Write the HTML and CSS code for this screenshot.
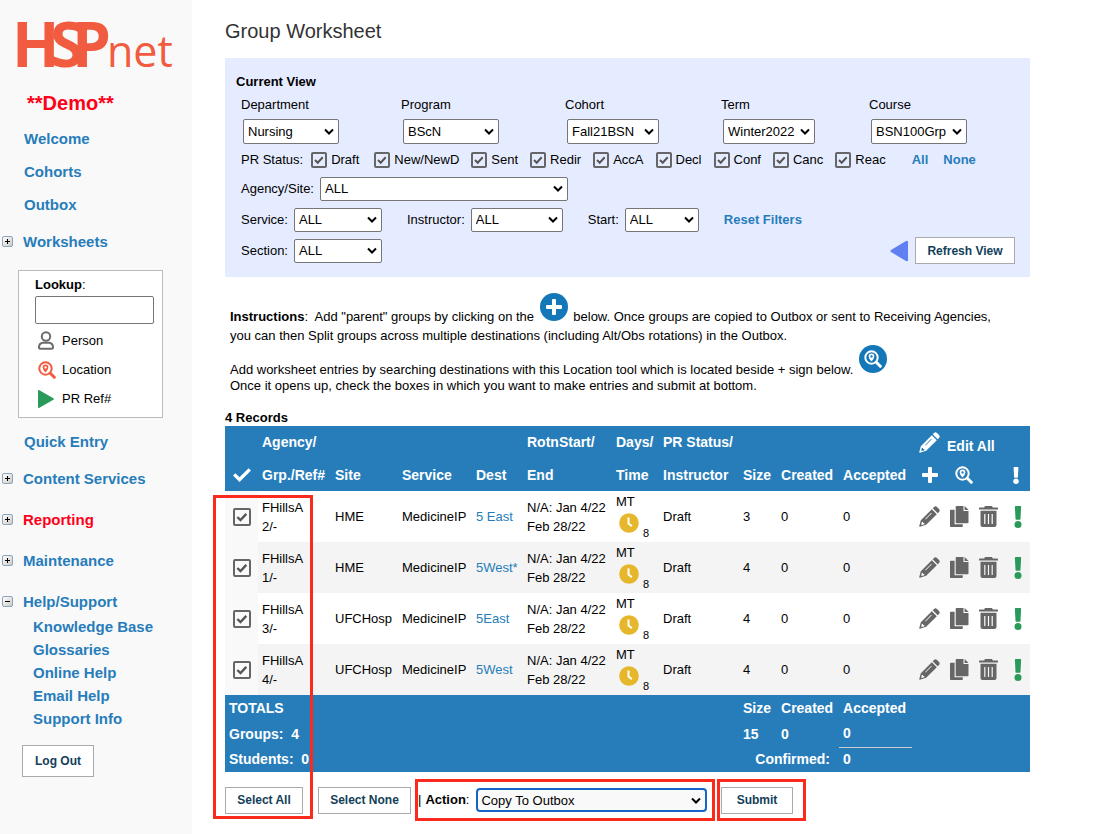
FILE: index.html
```html
<!DOCTYPE html>
<html lang="en">
<head>
    <meta charset="UTF-8">
    <meta name="viewport" content="width=device-width, initial-scale=1.0">
    <title>HSPnet - Group Worksheet</title>
    <link rel="stylesheet" href="styles.css">
</head>
<body>
    <!-- icon sprite -->
    <svg class="sprite" aria-hidden="true">
        <symbol id="pencil" viewBox="0 0 21 21">
            <path d="M15 1q1.500-1.400 3 0l2 2q1.400 1.500 0 3l-1.300 1.300-5-5z"/>
            <path fill-rule="evenodd" d="M12.800 3.200l5 5L7.200 18.800.7 20.800l-.5-.5L1.800 14.200zM2.900 15.800l-.7 2.500.6.600 2.600-.7-.1-1.100-1.200-.1-.1-1.100zM12.300 6.800L6.100 13l.5.5 6.200-6.200z"/>
        </symbol>
        <symbol id="copy" viewBox="0 0 19 21">
            <path d="M6.500 0h7v5H18.500v11.500q0 .7-.8.700H6.500q-.8 0-.8-.7V.7q0-.7.8-.7z"/>
            <path d="M14.600 0l4 4h-4z"/>
            <path d="M.8 3.800h3.800v14.400h8.200v2q0 .8-.8.800H.8q-.8 0-.8-.8V4.600q0-.8.8-.8z"/>
        </symbol>
        <symbol id="trash" viewBox="0 0 19 21">
            <path d="M6 0h7l.8 1.400h4.500q.7 0 .7.700v1.300H0V2.100q0-.7.7-.7h4.500z"/>
            <path fill-rule="evenodd" d="M1.500 4.800h16V19q0 2-2 2h-12q-2 0-2-2zM5.200 8v10h1.200V8zm3.700 0v10h1.200V8zm3.700 0v10h1.200V8z"/>
        </symbol>
        <symbol id="alert" viewBox="0 0 8 22">
            <path d="M1.700 0h4.600q.9 0 .8.900l-.6 12.100q0 .8-.8.800H2.300q-.8 0-.8-.8L.9.900Q.8 0 1.700 0z"/>
            <circle cx="4" cy="18.500" r="3.500"/>
        </symbol>
        <symbol id="clock" viewBox="0 0 20 20">
            <circle cx="10" cy="10" r="9.800"/>
            <path class="line" d="M9.500 4.500v6l3.400 2.600"/>
        </symbol>
        <symbol id="plus" viewBox="0 0 16 16">
            <path d="M7 0h2q1 0 1 1v5h5q1 0 1 1v2q0 1-1 1h-5v5q0 1-1 1H7q-1 0-1-1v-5H1q-1 0-1-1V7q0-1 1-1h5V1q0-1 1-1z"/>
        </symbol>
        <symbol id="search" viewBox="0 0 18 18">
            <circle class="ring" cx="7.500" cy="7.500" r="6.200"/>
            <path class="handle" d="M12.300 12.300l4 4"/>
            <path fill-rule="evenodd" d="M7.500 3.500q2.900.2 2.900 2.800 0 2.200-2.900 5.200-2.900-3-2.900-5.200 0-2.600 2.900-2.800zm0 1.700a1.200 1.200 0 100 2.400 1.200 1.200 0 100-2.400z"/>
        </symbol>
        <symbol id="check" viewBox="0 0 18 14">
            <path d="M0 7.600l2.300-2.300L6.500 9.300 15.600.2 18 2.500 6.500 14z"/>
        </symbol>
    </svg>

    <div class="page">
        <nav class="sidebar">
            <svg class="logo" viewBox="0 0 156 50" role="img" aria-label="HSPnet">
                <text class="logo-hsp" x="-6 32 54" y="47">HSP</text>
                <path d="M54 6h14" stroke="#f15b40" stroke-width="7" stroke-linecap="round"/>
                <text class="logo-net" x="89" y="47">net</text>
            </svg>
            <p class="demo">**Demo**</p>
            <ul class="menu">
                <li><a href="#">Welcome</a></li>
                <li><a href="#">Cohorts</a></li>
                <li><a href="#">Outbox</a></li>
                <li class="group"><button type="button" class="toggle" aria-label="Expand Worksheets"></button><a href="#">Worksheets</a></li>
            </ul>
            <form class="lookup">
                <label for="lookup"><b>Lookup</b>:</label>
                <input type="text" id="lookup">
                <a href="#">
                    <svg class="person" viewBox="0 0 16 19"><circle cx="8" cy="5.500" r="4.200"/><path d="M4.500 11.800h7q3.500.7 3.500 4.500 0 1.500-1.500 1.500h-11q-1.500 0-1.500-1.500 0-3.800 3.500-4.500z"/></svg>
                    Person
                </a>
                <a href="#"><svg class="location"><use href="#search"/></svg>Location</a>
                <a href="#"><svg class="play" viewBox="0 0 16 18"><path d="M0 1q0-1.500 1.400-.8l14 8q1 .8 0 1.600l-14 8Q0 18.500 0 17z"/></svg>PR Ref#</a>
            </form>
            <ul class="menu menu-lower">
                <li><a href="#">Quick Entry</a></li>
                <li class="group"><button type="button" class="toggle" aria-label="Expand Content Services"></button><a href="#">Content Services</a></li>
                <li class="group"><button type="button" class="toggle" aria-label="Expand Reporting"></button><a href="#" class="red">Reporting</a></li>
                <li class="group"><button type="button" class="toggle" aria-label="Expand Maintenance"></button><a href="#">Maintenance</a></li>
                <li class="group"><button type="button" class="toggle open" aria-label="Collapse Help/Support"></button><a href="#">Help/Support</a></li>
            </ul>
            <ul class="submenu">
                <li><a href="#">Knowledge Base</a></li>
                <li><a href="#">Glossaries</a></li>
                <li><a href="#">Online Help</a></li>
                <li><a href="#">Email Help</a></li>
                <li><a href="#">Support Info</a></li>
            </ul>
            <button type="button" class="btn btn-logout">Log Out</button>
        </nav>

        <main class="main">
            <h1>Group Worksheet</h1>

            <form class="filters">
                <h2>Current View</h2>
                <div class="fields">
                    <div class="field"><label for="department">Department</label><select id="department" class="w-96"><option>Nursing</option></select></div>
                    <div class="field"><label for="program">Program</label><select id="program" class="w-96"><option>BScN</option></select></div>
                    <div class="field"><label for="cohort">Cohort</label><select id="cohort" class="w-92"><option>Fall21BSN</option></select></div>
                    <div class="field"><label for="term">Term</label><select id="term" class="w-92"><option>Winter2022</option></select></div>
                    <div class="field"><label for="course">Course</label><select id="course" class="w-96"><option>BSN100Grp</option></select></div>
                </div>
                <div class="row status">
                    <span>PR Status:</span>
                    <label class="first"><input type="checkbox" checked>Draft</label>
                    <label><input type="checkbox" checked>New/NewD</label>
                    <label><input type="checkbox" checked>Sent</label>
                    <label><input type="checkbox" checked>Redir</label>
                    <label><input type="checkbox" checked>AccA</label>
                    <label><input type="checkbox" checked>Decl</label>
                    <label><input type="checkbox" checked>Conf</label>
                    <label><input type="checkbox" checked>Canc</label>
                    <label><input type="checkbox" checked>Reac</label>
                    <a href="#" class="all">All</a>
                    <a href="#">None</a>
                </div>
                <div class="row">
                    <label for="agency">Agency/Site:</label>
                    <select id="agency" class="w-248"><option>ALL</option></select>
                </div>
                <div class="row">
                    <label for="service">Service:</label>
                    <select id="service" class="w-88"><option>ALL</option></select>
                    <label for="instructor" class="next">Instructor:</label>
                    <select id="instructor" class="w-92"><option>ALL</option></select>
                    <label for="start" class="next">Start:</label>
                    <select id="start" class="w-74"><option>ALL</option></select>
                    <a href="#" class="next">Reset Filters</a>
                </div>
                <div class="row">
                    <label for="section">Section:</label>
                    <select id="section" class="w-88"><option>ALL</option></select>
                    <span class="refresh">
                        <svg class="arrow" viewBox="0 0 19 22"><path d="M18 2v18q0 2-2 1L1 12q-1-1 0-2L16 1q2-1 2 1z"/></svg>
                        <button type="button" class="btn btn-refresh">Refresh View</button>
                    </span>
                </div>
            </form>

            <section class="instructions">
                <p><b>Instructions</b>:&nbsp; Add "parent" groups by clicking on the <span class="round"><svg class="i-plus"><use href="#plus"/></svg></span> below. Once groups are copied to Outbox or sent to Receiving Agencies,<br>you can then Split groups across multiple destinations (including Alt/Obs rotations) in the Outbox.</p>
                <p class="second">Add worksheet entries by searching destinations with this Location tool which is located beside + sign below. <span class="round"><svg class="i-search"><use href="#search"/></svg></span><br>Once it opens up, check the boxes in which you want to make entries and submit at bottom.</p>
            </section>

            <h3>4 Records</h3>
            <div class="worksheet">
                <table>
                    <colgroup>
                        <col class="c-check"><col class="c-group"><col class="c-site"><col class="c-service"><col class="c-dest"><col class="c-rotn">
                        <col class="c-days"><col class="c-status"><col class="c-size"><col class="c-created"><col class="c-accepted"><col class="c-tools">
                    </colgroup>
                    <thead>
                        <tr>
                            <td></td>
                            <th scope="col">Agency/</th>
                            <td></td>
                            <td></td>
                            <td></td>
                            <th scope="col">RotnStart/</th>
                            <th scope="col">Days/</th>
                            <th scope="col" colspan="2">PR Status/</th>
                            <td></td>
                            <td></td>
                            <td><a href="#" class="edit-all"><svg class="i-pencil"><use href="#pencil"/></svg><span>Edit All</span></a></td>
                        </tr>
                        <tr>
                            <th class="mark"><svg class="i-check"><use href="#check"/></svg></th>
                            <th scope="col">Grp./Ref#</th>
                            <th scope="col">Site</th>
                            <th scope="col">Service</th>
                            <th scope="col">Dest</th>
                            <th scope="col">End</th>
                            <th scope="col">Time</th>
                            <th scope="col">Instructor</th>
                            <th scope="col">Size</th>
                            <th scope="col">Created</th>
                            <th scope="col">Accepted</th>
                            <td>
                                <div class="head-tools">
                                    <a href="#" aria-label="Add group"><svg class="i-plus"><use href="#plus"/></svg></a>
                                    <a href="#" aria-label="Find location"><svg class="i-search"><use href="#search"/></svg></a>
                                    <svg class="i-alert"><use href="#alert"/></svg>
                                </div>
                            </td>
                        </tr>
                    </thead>
                    <tbody>
                        <tr>
                            <td class="mark"><input type="checkbox" checked aria-label="Select FHillsA 2"></td>
                            <td>FHillsA<br>2/-</td>
                            <td>HME</td>
                            <td>MedicineIP</td>
                            <td><a href="#">5 East</a></td>
                            <td>N/A: Jan 4/22<br>Feb 28/22</td>
                            <td class="days">MT<div><svg class="i-clock"><use href="#clock"/></svg><small>8</small></div></td>
                            <td>Draft</td>
                            <td>3</td>
                            <td>0</td>
                            <td>0</td>
                            <td>
                                <div class="tools">
                                    <a href="#" aria-label="Edit"><svg class="i-pencil"><use href="#pencil"/></svg></a>
                                    <a href="#" aria-label="Copy"><svg class="i-copy"><use href="#copy"/></svg></a>
                                    <a href="#" aria-label="Delete"><svg class="i-trash"><use href="#trash"/></svg></a>
                                    <svg class="i-alert"><use href="#alert"/></svg>
                                </div>
                            </td>
                        </tr>
                        <tr>
                            <td class="mark"><input type="checkbox" checked aria-label="Select FHillsA 1"></td>
                            <td>FHillsA<br>1/-</td>
                            <td>HME</td>
                            <td>MedicineIP</td>
                            <td><a href="#">5West*</a></td>
                            <td>N/A: Jan 4/22<br>Feb 28/22</td>
                            <td class="days">MT<div><svg class="i-clock"><use href="#clock"/></svg><small>8</small></div></td>
                            <td>Draft</td>
                            <td>4</td>
                            <td>0</td>
                            <td>0</td>
                            <td>
                                <div class="tools">
                                    <a href="#" aria-label="Edit"><svg class="i-pencil"><use href="#pencil"/></svg></a>
                                    <a href="#" aria-label="Copy"><svg class="i-copy"><use href="#copy"/></svg></a>
                                    <a href="#" aria-label="Delete"><svg class="i-trash"><use href="#trash"/></svg></a>
                                    <svg class="i-alert"><use href="#alert"/></svg>
                                </div>
                            </td>
                        </tr>
                        <tr>
                            <td class="mark"><input type="checkbox" checked aria-label="Select FHillsA 3"></td>
                            <td>FHillsA<br>3/-</td>
                            <td>UFCHosp</td>
                            <td>MedicineIP</td>
                            <td><a href="#">5East</a></td>
                            <td>N/A: Jan 4/22<br>Feb 28/22</td>
                            <td class="days">MT<div><svg class="i-clock"><use href="#clock"/></svg><small>8</small></div></td>
                            <td>Draft</td>
                            <td>4</td>
                            <td>0</td>
                            <td>0</td>
                            <td>
                                <div class="tools">
                                    <a href="#" aria-label="Edit"><svg class="i-pencil"><use href="#pencil"/></svg></a>
                                    <a href="#" aria-label="Copy"><svg class="i-copy"><use href="#copy"/></svg></a>
                                    <a href="#" aria-label="Delete"><svg class="i-trash"><use href="#trash"/></svg></a>
                                    <svg class="i-alert"><use href="#alert"/></svg>
                                </div>
                            </td>
                        </tr>
                        <tr>
                            <td class="mark"><input type="checkbox" checked aria-label="Select FHillsA 4"></td>
                            <td>FHillsA<br>4/-</td>
                            <td>UFCHosp</td>
                            <td>MedicineIP</td>
                            <td><a href="#">5West</a></td>
                            <td>N/A: Jan 4/22<br>Feb 28/22</td>
                            <td class="days">MT<div><svg class="i-clock"><use href="#clock"/></svg><small>8</small></div></td>
                            <td>Draft</td>
                            <td>4</td>
                            <td>0</td>
                            <td>0</td>
                            <td>
                                <div class="tools">
                                    <a href="#" aria-label="Edit"><svg class="i-pencil"><use href="#pencil"/></svg></a>
                                    <a href="#" aria-label="Copy"><svg class="i-copy"><use href="#copy"/></svg></a>
                                    <a href="#" aria-label="Delete"><svg class="i-trash"><use href="#trash"/></svg></a>
                                    <svg class="i-alert"><use href="#alert"/></svg>
                                </div>
                            </td>
                        </tr>
                    </tbody>
                    <tfoot>
                        <tr>
                            <td colspan="8">TOTALS</td>
                            <td>Size</td>
                            <td>Created</td>
                            <td>Accepted</td>
                            <td></td>
                        </tr>
                        <tr>
                            <td colspan="8">Groups:&nbsp; 4</td>
                            <td>15</td>
                            <td>0</td>
                            <td class="sum">0</td>
                            <td></td>
                        </tr>
                        <tr>
                            <td colspan="8">Students:&nbsp; 0</td>
                            <td colspan="2" class="confirmed">Confirmed:</td>
                            <td>0</td>
                            <td></td>
                        </tr>
                    </tfoot>
                </table>

                <div class="actions">
                    <button type="button" class="btn btn-all">Select All</button>
                    <button type="button" class="btn btn-none">Select None</button>
                    <div class="callout">
                        <span class="bar">|</span>
                        <label for="action"><b>Action</b>:</label>
                        <select id="action"><option>Copy To Outbox</option></select>
                    </div>
                    <div class="callout callout-submit">
                        <button type="submit" class="btn btn-submit">Submit</button>
                    </div>
                </div>
                <div class="callout-select"></div>
            </div>
        </main>
    </div>
</body>
</html>
```

FILE: styles.css
```css
* {
    box-sizing: border-box;
}

body {
    margin: 0;
    background: #fff;
    color: #000;
    font: 13px/16px "Liberation Sans", Arial, sans-serif;
}

h1,
h2,
h3,
p,
ul {
    margin: 0;
    padding: 0;
}

ul {
    list-style: none;
}

a {
    color: #277dba;
    text-decoration: none;
}

svg {
    display: block;
    fill: currentColor;
}

.sprite {
    position: absolute;
    width: 0;
    height: 0;
}

.page {
    display: flex;
    min-height: 100vh;
}

/* sidebar */
.sidebar {
    flex: 0 0 192px;
    padding-top: 20px;
    background: #f9f9f9;
}

.logo {
    width: 156px;
    height: 50px;
    margin: 0 0 21px 18px;
    overflow: visible;
    fill: #f15b40;
}

.logo-hsp {
    font: bold 62px "Open Sans", sans-serif;
}

.logo-net {
    font: 43px "Open Sans", sans-serif;
}

.demo {
    padding-left: 27px;
    color: #ff0018;
    font-size: 20px;
    font-weight: bold;
    line-height: 24px;
}

.menu {
    margin-top: 7px;
    font-size: 15px;
    font-weight: bold;
}

.menu li {
    display: flex;
    align-items: center;
    height: 33px;
    padding-left: 24px;
}

.menu .group {
    gap: 10px;
    height: 41px;
    padding-left: 2px;
}

.menu .red {
    color: #ff0018;
}

.toggle {
    position: relative;
    width: 11px;
    height: 11px;
    padding: 0;
    border: 1px solid #8aa5c0;
    border-radius: 2px;
    background: linear-gradient(135deg, #fff, #cfcbc2);
}

.toggle::before,
.toggle::after {
    content: "";
    position: absolute;
    top: 4px;
    left: 2px;
    width: 5px;
    height: 1px;
    background: #000;
}

.toggle::after {
    transform: rotate(90deg);
}

.toggle.open::after {
    display: none;
}

.lookup {
    display: flex;
    flex-direction: column;
    width: 145px;
    height: 148px;
    margin: 8px 0 0 18px;
    padding: 6px 8px 0 16px;
    border: 1px solid #bbb;
    background: #fff;
}

.lookup input {
    height: 28px;
    margin: 3px 0 2px;
    border: 1px solid #767676;
    border-radius: 2px;
    background: #fff;
}

.lookup a {
    display: flex;
    align-items: center;
    gap: 8px;
    height: 29px;
    padding-left: 3px;
    color: #000;
}

.person {
    width: 16px;
    height: 19px;
    fill: none;
    stroke: #6b6b6b;
    stroke-width: 2;
}

.location {
    width: 18px;
    height: 18px;
    margin-right: -2px;
    color: #f15b40;
}

.play {
    width: 16px;
    height: 18px;
    fill: #299a59;
}

.submenu {
    margin-top: -7px;
    padding-left: 33px;
    font-size: 15px;
    font-weight: bold;
    line-height: 23px;
}

.btn {
    height: 27px;
    padding: 0;
    border: 1px solid #aaa;
    background: #fff;
    color: #12405a;
    font: bold 12px "Liberation Sans", Arial, sans-serif;
}

.btn-logout {
    width: 72px;
    height: 32px;
    margin: 15px 0 0 22px;
}

/* main column */
.main {
    flex: 1;
    min-width: 0;
    padding: 19px 75px 13px 33px;
}

h1 {
    margin-bottom: 15px;
    color: #333;
    font-size: 20px;
    font-weight: normal;
    line-height: 24px;
}

h2,
h3 {
    font-size: 13px;
    line-height: 16px;
}

/* filter panel */
.filters {
    padding: 16px 15px 11px 16px;
    background: #e6ecff;
}

.filters h2 {
    margin: 0 0 7px -5px;
}

.fields {
    display: grid;
    grid-template-columns: 160px 164px 156px 148px 1fr;
}

.field {
    display: flex;
    flex-direction: column;
    align-items: flex-start;
    gap: 6px;
}

.field select {
    height: 25px;
    margin-left: 2px;
}

select {
    appearance: none;
    height: 24px;
    padding: 0 4px;
    border: 1px solid #767676;
    border-radius: 2px;
    background: #fff url("data:image/svg+xml,%3Csvg xmlns='http://www.w3.org/2000/svg' width='10' height='7'%3E%3Cpath d='M1 1.500l4 4 4-4' fill='none' stroke='black' stroke-width='2'/%3E%3C/svg%3E") no-repeat right 4px center;
    color: #000;
    font: 13px "Liberation Sans", Arial, sans-serif;
}

.w-74 {
    width: 74px;
}

.w-88 {
    width: 88px;
}

.w-92 {
    width: 92px;
}

.w-96 {
    width: 96px;
}

.w-248 {
    width: 248px;
}

.row {
    display: flex;
    align-items: center;
    gap: 6px;
    height: 31px;
}

.row .next {
    margin-left: 19px;
}

.row a {
    font-weight: bold;
}

.status {
    gap: 12px;
    height: 32px;
    margin-bottom: -3px;
}

.status label {
    display: flex;
    align-items: center;
    gap: 4px;
}

.status .first {
    margin: 0 3px 0 -4px;
}

.status .all {
    margin: 0 3px 0 14px;
}

input[type="checkbox"] {
    appearance: none;
    flex: none;
    width: 16px;
    height: 16px;
    margin: 0;
    border: 2px solid #666;
    border-radius: 2px;
    background: url("data:image/svg+xml,%3Csvg xmlns='http://www.w3.org/2000/svg' viewBox='0 0 12 12'%3E%3Cpath d='M2 6l2.700 2.700 5-5.400' fill='none' stroke='%23555' stroke-width='2'/%3E%3C/svg%3E") center / 100%;
}

.refresh {
    display: flex;
    align-items: center;
    gap: 6px;
    margin-left: auto;
}

.arrow {
    width: 19px;
    height: 22px;
    fill: #5f7ff3;
}

.btn-refresh {
    width: 100px;
}

/* instructions */
.instructions {
    padding: 16px 0 0 5px;
}

.instructions p {
    line-height: 19px;
}

.instructions .second {
    line-height: 16px;
}

.round {
    display: inline-flex;
    align-items: center;
    justify-content: center;
    width: 28px;
    height: 28px;
    margin: 0 2px;
    border-radius: 50%;
    background: #1478b8;
    color: #fff;
    vertical-align: 6px;
}

.ring,
.handle,
.line {
    fill: none;
    stroke: currentColor;
    stroke-width: 2;
}

.handle {
    stroke-width: 3;
    stroke-linecap: round;
}

.line {
    stroke: #fff;
}

h3 {
    margin-top: 16px;
}

/* worksheet */
.worksheet {
    position: relative;
}

table {
    width: 100%;
    border-collapse: collapse;
    table-layout: fixed;
    line-height: 19px;
}

.c-check {
    width: 33px;
}

.c-group,
.c-accepted {
    width: 73px;
}

.c-site {
    width: 67px;
}

.c-service {
    width: 74px;
}

.c-dest {
    width: 51px;
}

.c-rotn {
    width: 89px;
}

.c-days {
    width: 47px;
}

.c-status {
    width: 80px;
}

.c-size {
    width: 38px;
}

.c-created {
    width: 62px;
}

th,
td {
    padding: 0 0 0 4px;
    text-align: left;
    white-space: nowrap;
}

thead,
tfoot {
    background: #277dba;
    color: #fff;
    font-size: 14px;
    font-weight: bold;
}

thead tr {
    height: 32px;
}

thead tr:first-child {
    height: 33px;
}

thead a {
    color: #fff;
}

tbody tr {
    height: 51px;
}

tbody tr:nth-child(even) {
    background: #f4f4f4;
}

tbody .mark {
    background: #f9f9f9;
}

.mark {
    padding-left: 8px;
}

.mark input[type="checkbox"] {
    display: block;
    width: 18px;
    height: 18px;
}

.days {
    line-height: 15px;
}

.days div {
    display: flex;
    align-items: flex-end;
    gap: 4px;
    height: 30px;
    padding-left: 3px;
}

.days .i-clock {
    margin-bottom: 6px;
}

.days small {
    font-size: 11px;
    line-height: 12px;
}

.edit-all,
.tools,
.head-tools {
    display: flex;
    align-items: center;
    padding-left: 3px;
}

.edit-all {
    gap: 7px;
}

.edit-all span {
    padding-top: 8px;
}

.tools {
    gap: 10px;
}

.tools a {
    color: #666;
}

.tools .i-alert {
    margin-left: 6px;
    color: #299a59;
}

.head-tools {
    gap: 17px;
    padding-left: 6px;
}

.head-tools .i-alert {
    height: 17px;
    margin-left: 22px;
}

.i-pencil {
    width: 21px;
    height: 21px;
}

.i-copy,
.i-trash {
    width: 19px;
    height: 21px;
}

.i-alert {
    width: 8px;
    height: 22px;
}

.i-clock {
    width: 20px;
    height: 20px;
    color: #e6b72a;
}

.i-plus {
    width: 16px;
    height: 16px;
}

.i-search {
    width: 18px;
    height: 18px;
}

.i-check {
    width: 18px;
    height: 14px;
}

tfoot tr {
    height: 26px;
}

tfoot tr:last-child {
    height: 25px;
}

tfoot .sum {
    border-bottom: 1px solid #ccc;
}

tfoot .confirmed {
    padding-right: 9px;
    text-align: right;
}

/* bottom bar */
.actions {
    display: flex;
    align-items: center;
    margin-top: 7px;
}

.btn-all {
    width: 78px;
    margin-right: 15px;
}

.btn-none {
    width: 93px;
    margin-right: 4px;
}

.callout {
    display: flex;
    align-items: center;
    width: 300px;
    height: 42px;
    padding-right: 5px;
    border: 3px solid #fb2a1d;
}

.callout .bar {
    margin-right: 4px;
}

.callout select {
    flex: 1;
    margin-left: 7px;
    border: 2px solid #1565c8;
    border-radius: 4px;
    background-color: #f9f9f9;
    padding: 0 3px;
}

.callout-submit {
    width: 89px;
    margin-left: 2px;
    padding: 0 0 0 1px;
}

.btn-submit {
    width: 72px;
}

/* red frame over the select column */
.callout-select {
    position: absolute;
    top: 69px;
    bottom: 2px;
    left: -12px;
    width: 100px;
    border: 3px solid #fb2a1d;
    pointer-events: none;
}
```
